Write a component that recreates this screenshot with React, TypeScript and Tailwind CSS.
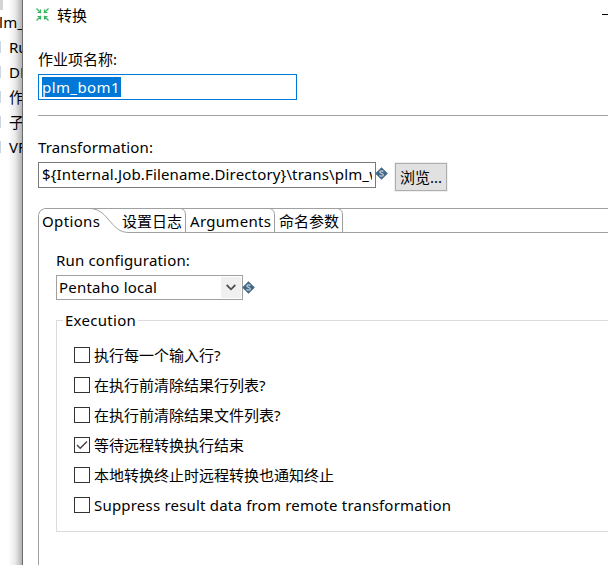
import type { ReactNode } from 'react'

// ── Background tree ───────────────────────────────────────────────────────────
const treeItems = ['Ru', 'DB', '作', '子', 'VF']

function TreeStrip() {
  return (
    <div className="relative w-[22px] shrink-0 overflow-hidden bg-white">
      <div className="h-[10px] w-[3px] bg-[#d4d4d4]" />
      <div className="-ml-px h-[24px] whitespace-nowrap leading-[25px] tracking-[0.3px]">lm_</div>
      {treeItems.map(t => (
        <div key={t} className="flex h-[25px] items-center gap-[8px] whitespace-nowrap">
          <span className="h-[12px] w-px shrink-0 bg-[#ccd6e2]" />
          {t}
        </div>
      ))}
      <div className="absolute inset-y-0 right-0 w-[14px] bg-linear-to-r from-black/0 via-black/8 to-black/30" />
    </div>
  )
}

// ── Icons ─────────────────────────────────────────────────────────────────────
function TransIcon() {
  return (
    <svg width="13" height="13" viewBox="0 0 13 13" fill="none" stroke="#35b45f" strokeWidth="1.2">
      <path d="M0.5 0.5L5 5M1.5 4.5H4.5V1.5M12.5 0.5L8 5M8.5 1.5V4.5H11.5M0.5 12.5L5 8M1.5 8.5H4.5V11.5M12.5 12.5L8 8M11.5 8.5H8.5V11.5" />
    </svg>
  )
}

function VarIcon() {
  return (
    <svg width="13" height="13" viewBox="0 0 13 13" className="-ml-px shrink-0">
      <path d="M6.5 0.2L12.8 6.5L6.5 12.8L0.2 6.5Z" fill="#436784" />
      <path d="M8.4 4.6C7.8 3.5 4.8 3.4 4.8 5C4.8 6.7 8.3 6 8.3 7.9C8.3 9.6 5.2 9.5 4.5 8.4" fill="none" stroke="#c5d2dc" strokeWidth="1.2" />
    </svg>
  )
}

// ── Form pieces ───────────────────────────────────────────────────────────────
function Check({ checked = false, children }: { checked?: boolean; children: ReactNode }) {
  return (
    <div className="flex h-[30px] items-center gap-[4px] whitespace-nowrap">
      <span className="flex size-[16px] shrink-0 items-center justify-center border border-[#333]">
        {checked && (
          <svg width="14" height="14" viewBox="0 0 14 14" fill="none" stroke="#444" strokeWidth="1.4">
            <path d="M2 7L5.2 10.2L12 3.4" />
          </svg>
        )}
      </span>
      {children}
    </div>
  )
}

function Tabs() {
  return (
    <div className="relative h-[25px] shrink-0 whitespace-nowrap">
      <svg width="570" height="25" viewBox="0 0 570 25" fill="none" stroke="#a0a0a0" className="absolute inset-0">
        <path d="M0.5 25V6.5L2.5 2.5L6.5 0.5H570" />
        <path d="M51 0.5C60 0.5 65 5 70 11C77 19 81 24.5 91 24.5H570" />
        <path d="M143 0.5C146 1.5 147.5 3 147.5 7V24M232 0.5C235 1.5 236.5 3 236.5 7V24M300 0.5C303 1.5 304.5 3 304.5 7V24" />
      </svg>
      <div className="relative flex h-[26px] items-center">
        <span className="ml-[4px] w-[80px] tracking-[0.35px]">Options</span>
        <span className="w-[68px]">设置日志</span>
        <span className="w-[89px] tracking-[0.3px]">Arguments</span>
        <span>命名参数</span>
      </div>
    </div>
  )
}

export default function App() {
  return (
    <div className="flex h-[565px] w-[608px] overflow-hidden bg-white font-['Noto_Sans','Noto_Sans_CJK_SC',sans-serif] text-[15px] leading-[20px] text-black">
      <TreeStrip />
      <main className="flex w-[586px] shrink-0 flex-col border-l border-[#6c6c6c] bg-white pl-[15px]">
        <div className="flex h-[29px] shrink-0 items-center">
          <div className="-ml-[2px] mr-[8px]"><TransIcon /></div>
          转换
          <span className="ml-auto h-px w-[6px] bg-black" />
        </div>

        <div className="mt-[20px] h-[20px]">作业项名称:</div>
        <div className="mt-[5px] flex h-[26px] w-[259px] shrink-0 items-center border border-[#0078d7] pl-[3px]">
          <span className="flex h-[20px] w-[79px] items-center whitespace-nowrap bg-[#0078d7] tracking-[0.4px] text-white">plm_bom1</span>
        </div>
        <div className="mt-[15px] h-px shrink-0 bg-[#a0a0a0]" />

        <div className="mt-[21px] h-[20px] tracking-[0.15px]">Transformation:</div>
        <div className="mt-[5px] flex h-[30px] shrink-0">
          <div className="h-[26px] w-[338px] border border-[#7a7a7a] px-[3px]">
            <div className="overflow-hidden whitespace-nowrap leading-[23px] tracking-[0.15px]">{'${Internal.Job.Filename.Directory}\\trans\\plm_wms'}</div>
          </div>
          <div className="mt-[5px]"><VarIcon /></div>
          <button className="ml-[7px] mt-px h-[28px] w-[52px] whitespace-nowrap border border-[#adadad] bg-[#e1e1e1] outline outline-[#f0f0f0]">浏览...</button>
        </div>

        <div className="h-[16px] shrink-0" />
        <Tabs />
        <section className="flex flex-1 flex-col border-l border-[#a0a0a0] pl-[17px]">
          <div className="mt-[17px] h-[20px] tracking-[0.18px]">Run configuration:</div>
          <div className="mt-[5px] flex items-center">
            <div className="flex h-[25px] w-[187px] items-center justify-between border border-[#a0a0a0] pl-[2px] pr-px">
              <span className="-mt-[2px] tracking-[0.22px]">Pentaho local</span>
              <span className="flex h-[21px] w-[20px] items-center justify-center bg-[#f0f0f0]">
                <svg width="10" height="7" viewBox="0 0 10 7" fill="none" stroke="#505050" strokeWidth="1.8">
                  <path d="M0.7 1L5 5.3L9.3 1" />
                </svg>
              </span>
            </div>
            <VarIcon />
          </div>
          <fieldset className="-mr-[2px] mt-[10px] h-[222px] min-w-0 border border-[#dcdcdc] px-[17px]">
            <legend className="-ml-[11px] h-[20px] px-[2px] tracking-[0.28px]">Execution</legend>
            <div className="pt-[10px]">
              <Check>执行每一个输入行?</Check>
              <Check>在执行前清除结果行列表?</Check>
              <Check>在执行前清除结果文件列表?</Check>
              <Check checked>等待远程转换执行结束</Check>
              <Check>本地转换终止时远程转换也通知终止</Check>
              <Check><span className="tracking-[0.2px]">Suppress result data from remote transformation</span></Check>
            </div>
          </fieldset>
        </section>
      </main>
    </div>
  )
}
